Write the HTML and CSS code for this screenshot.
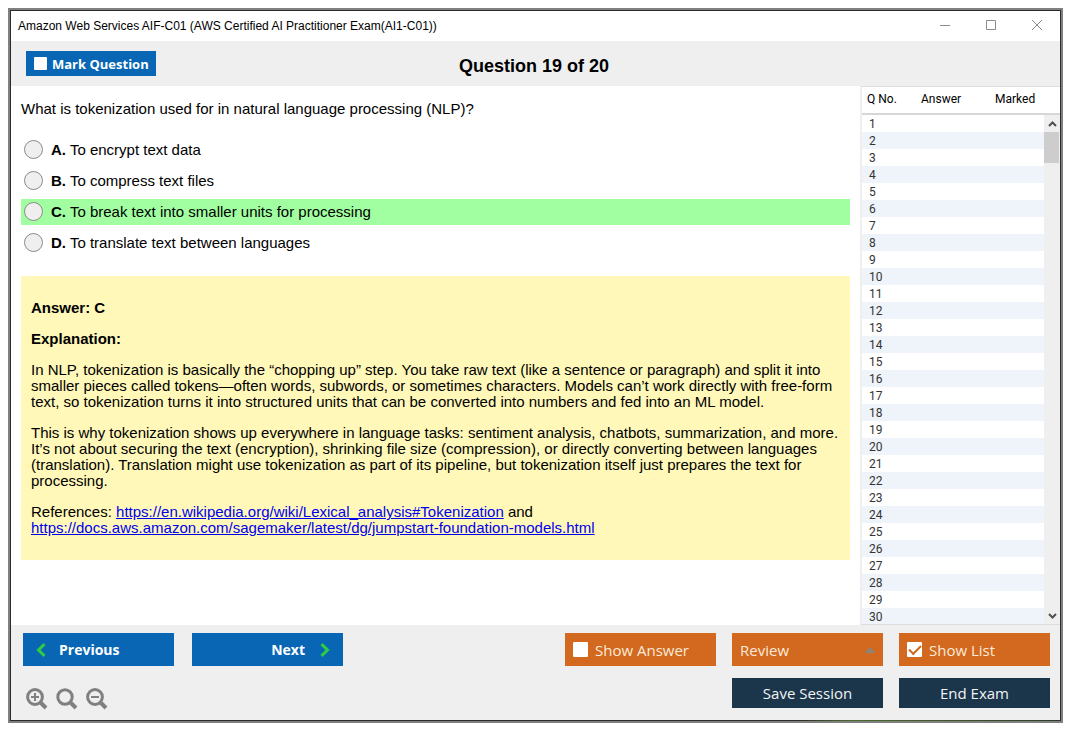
FILE: index.html
```html
<!DOCTYPE html>
<html lang="en">
<head>
<meta charset="utf-8">
<title>Amazon Web Services AIF-C01</title>
<link rel="stylesheet" href="styles.css">
</head>
<body>
<div class="window">
  <div class="window-inner">
    <header class="titlebar">
      <span class="titlebar-text">Amazon Web Services AIF-C01 (AWS Certified AI Practitioner Exam(AI1-C01))</span>
      <div class="window-controls">
        <button class="window-button" type="button" aria-label="Minimize"><svg width="12" height="12" viewBox="0 0 12 12"><path d="M1 5.500h10"/></svg></button>
        <button class="window-button" type="button" aria-label="Maximize"><svg width="12" height="12" viewBox="0 0 12 12"><path d="M1.500 .500h9v9h-9z"/></svg></button>
        <button class="window-button" type="button" aria-label="Close"><svg width="12" height="12" viewBox="0 0 12 12"><path d="M1 0l10 10M11 0L1 10"/></svg></button>
      </div>
    </header>

    <div class="question-bar">
      <label class="mark"><input class="check check-small" type="checkbox"><span>Mark Question</span></label>
      <h1 class="question-count">Question 19 of 20</h1>
    </div>

    <div class="workspace">
      <main class="question">
        <p class="prompt">What is tokenization used for in natural language processing (NLP)?</p>
        <div class="options" role="radiogroup" aria-label="Options">
          <label class="option"><input class="radio" type="radio" name="answer"><span><b>A.</b> To encrypt text data</span></label>
          <label class="option"><input class="radio" type="radio" name="answer"><span><b>B.</b> To compress text files</span></label>
          <label class="option option-correct"><input class="radio" type="radio" name="answer"><span><b>C.</b> To break text into smaller units for processing</span></label>
          <label class="option"><input class="radio" type="radio" name="answer"><span><b>D.</b> To translate text between languages</span></label>
        </div>
        <section class="explanation">
          <p><b>Answer: C</b></p>
          <p><b>Explanation:</b></p>
          <p>In NLP, tokenization is basically the “chopping up” step. You take raw text (like a sentence or paragraph) and split it into smaller pieces called tokens—often words, subwords, or sometimes characters. Models can’t work directly with free-form text, so tokenization turns it into structured units that can be converted into numbers and fed into an ML model.</p>
          <p>This is why tokenization shows up everywhere in language tasks: sentiment analysis, chatbots, summarization, and more. It’s not about securing the text (encryption), shrinking file size (compression), or directly converting between languages (translation). Translation might use tokenization as part of its pipeline, but tokenization itself just prepares the text for processing.</p>
          <p>References: <a href="https://en.wikipedia.org/wiki/Lexical_analysis#Tokenization">https://en.wikipedia.org/wiki/Lexical_analysis#Tokenization</a> and <a href="https://docs.aws.amazon.com/sagemaker/latest/dg/jumpstart-foundation-models.html">https://docs.aws.amazon.com/sagemaker/latest/dg/jumpstart-foundation-models.html</a></p>
        </section>
      </main>

      <aside class="list">
        <div class="list-view">
          <table class="list-table">
            <thead><tr><th class="col-number">Q No.</th><th class="col-answer">Answer</th><th>Marked</th></tr></thead>
            <tbody>
              <tr><td>1</td><td></td><td></td></tr>
              <tr><td>2</td><td></td><td></td></tr>
              <tr><td>3</td><td></td><td></td></tr>
              <tr><td>4</td><td></td><td></td></tr>
              <tr><td>5</td><td></td><td></td></tr>
              <tr><td>6</td><td></td><td></td></tr>
              <tr><td>7</td><td></td><td></td></tr>
              <tr><td>8</td><td></td><td></td></tr>
              <tr><td>9</td><td></td><td></td></tr>
              <tr><td>10</td><td></td><td></td></tr>
              <tr><td>11</td><td></td><td></td></tr>
              <tr><td>12</td><td></td><td></td></tr>
              <tr><td>13</td><td></td><td></td></tr>
              <tr><td>14</td><td></td><td></td></tr>
              <tr><td>15</td><td></td><td></td></tr>
              <tr><td>16</td><td></td><td></td></tr>
              <tr><td>17</td><td></td><td></td></tr>
              <tr><td>18</td><td></td><td></td></tr>
              <tr><td>19</td><td></td><td></td></tr>
              <tr><td>20</td><td></td><td></td></tr>
              <tr><td>21</td><td></td><td></td></tr>
              <tr><td>22</td><td></td><td></td></tr>
              <tr><td>23</td><td></td><td></td></tr>
              <tr><td>24</td><td></td><td></td></tr>
              <tr><td>25</td><td></td><td></td></tr>
              <tr><td>26</td><td></td><td></td></tr>
              <tr><td>27</td><td></td><td></td></tr>
              <tr><td>28</td><td></td><td></td></tr>
              <tr><td>29</td><td></td><td></td></tr>
              <tr><td>30</td><td></td><td></td></tr>
            </tbody>
          </table>
        </div>
        <div class="scroll">
          <div class="scroll-head"></div>
          <button class="scroll-arrow" type="button" aria-label="Scroll up"><svg width="9" height="6" viewBox="0 0 9 6"><path d="M1 5l3.500-3.500L8 5"/></svg></button>
          <div class="scroll-thumb"></div>
          <div class="scroll-space"></div>
          <button class="scroll-arrow" type="button" aria-label="Scroll down"><svg width="9" height="6" viewBox="0 0 9 6"><path d="M1 1l3.500 3.500L8 1"/></svg></button>
        </div>
      </aside>
    </div>

    <footer class="footer">
      <div class="footer-left">
        <div class="nav">
          <button class="button nav-button" type="button"><svg class="chevron" width="10" height="14" viewBox="0 0 10 14"><path d="M8.500 1.200L2.500 7l6 5.800"/></svg><span>Previous</span></button>
          <button class="button nav-button nav-next" type="button"><span>Next</span><svg class="chevron" width="10" height="14" viewBox="0 0 10 14"><path d="M1.500 1.200L7.500 7l-6 5.800"/></svg></button>
        </div>
        <div class="zoom">
          <button class="zoom-button" type="button" aria-label="Zoom in"><svg width="22" height="22" viewBox="0 0 22 22"><circle cx="9" cy="9" r="7.400"/><path class="handle" d="M14 14l6 6"/><path class="sign" d="M5 9h8M9 5v8"/></svg></button>
          <button class="zoom-button" type="button" aria-label="Reset zoom"><svg width="22" height="22" viewBox="0 0 22 22"><circle class="bold" cx="9" cy="9" r="7.200"/><path class="handle" d="M14 14l6 6"/></svg></button>
          <button class="zoom-button" type="button" aria-label="Zoom out"><svg width="22" height="22" viewBox="0 0 22 22"><circle cx="9" cy="9" r="7.400"/><path class="handle" d="M14 14l6 6"/><path class="sign" d="M5 9h8"/></svg></button>
        </div>
      </div>
      <div class="actions">
        <label class="button orange"><input class="check" type="checkbox"><span>Show Answer</span></label>
        <button class="button orange review" type="button" aria-haspopup="menu"><span>Review</span><svg width="10" height="6" viewBox="0 0 10 6"><path d="M0 6l5-6 5 6z" fill="#8a8580"/></svg></button>
        <label class="button orange"><input class="check" type="checkbox" checked><span>Show List</span></label>
        <button class="button navy save" type="button">Save Session</button>
        <button class="button navy" type="button">End Exam</button>
      </div>
    </footer>
  </div>
</div>
</body>
</html>
```
FILE: styles.css
```css
* { box-sizing: border-box; }

body {
  margin: 0;
  padding: 8px 12px 12px 8px;
  height: 100vh;
  display: flex;
  background: #fff;
  color: #000;
  font-family: "Liberation Sans", Arial, sans-serif;
  font-size: 15px;
}

button { font: inherit; margin: 0; padding: 0; border: 0; background: none; }
svg { display: block; fill: none; flex: none; }

.window {
  flex: 1;
  display: flex;
  padding: 1px;
  border: 2px solid #808080;
  background: linear-gradient(to right, #2b2b2b 75%, #4a6a2a 80%, #2e3a26 100%) bottom / 100% 1px no-repeat #2b2b2b;
}
.window-inner {
  flex: 1;
  min-width: 0;
  display: flex;
  flex-direction: column;
  background: #fff;
}

.titlebar {
  display: flex;
  justify-content: space-between;
  align-items: center;
  height: 30px;
  padding-left: 7px;
  font-size: 12px;
}
.window-controls { display: flex; }
.window-button { width: 46px; height: 28px; display: grid; place-items: center; }
.window-button svg { stroke: #8c8c8c; }

.question-bar {
  display: grid;
  grid-template-columns: 1fr auto 1fr;
  align-items: center;
  height: 45px;
  padding: 0 18px 0 15px;
  background: #efefef;
}
.mark {
  justify-self: start;
  display: flex;
  align-items: center;
  gap: 5px;
  width: 130px;
  height: 25px;
  padding-left: 8px;
  background: #0866b5;
  color: #fff;
  font: bold 13px "Open Sans", sans-serif;
}
.question-count { margin: 0; padding-top: 4px; font-size: 18px; line-height: 20px; }

.check {
  appearance: none;
  flex: none;
  width: 15px;
  height: 15px;
  margin: 0;
  border-radius: 1px;
  background: #fff;
}
.check-small { width: 13px; height: 13px; }
.check:checked { display: grid; place-items: center; }
.check:checked::before {
  content: "";
  width: 10px;
  height: 5px;
  border: solid #d2691e;
  border-width: 0 0 2px 2px;
  transform: translateY(-1px) rotate(-45deg);
}

.workspace { flex: 1; min-height: 0; display: flex; }
.question { flex: 1; min-width: 0; padding: 14px 10px; overflow: hidden; }
.prompt { margin: 0 0 19px; line-height: 18px; }
.options { display: flex; flex-direction: column; gap: 5px; }
.option { display: flex; align-items: center; gap: 8px; height: 26px; padding: 0 3px 2px; }
.option-correct { background: #a1ffa1; }
.radio {
  appearance: none;
  flex: none;
  width: 19px;
  height: 19px;
  margin: 0;
  border: 1px solid #8a8a8a;
  border-radius: 50%;
  background: #efefef;
}
.explanation {
  margin-top: 20px;
  padding: 24px 10px;
  background: #fff8b9;
  line-height: 16px;
}
.explanation p { margin: 0 0 15px; }
.explanation p:last-child { margin-bottom: 0; }
.explanation a { color: #0000ee; }

.list {
  width: 200px;
  display: flex;
  border: solid #dcdcdc;
  border-width: 1px 0 1px 2px;
  border-left-color: #efefef;
  font: 12px Roboto, sans-serif;
}
.list-view { flex: 1; overflow: hidden; }
.list-table { width: 100%; border-collapse: separate; border-spacing: 0; table-layout: fixed; }
.list-table th {
  height: 28px;
  padding: 0 0 2px;
  border-bottom: 2px solid #d6d6d6;
  text-align: left;
  font-weight: normal;
  white-space: nowrap;
}
.list-table th:first-child { padding-left: 5px; }
.col-number { width: 59px; }
.col-answer { width: 74px; }
.list-table td { height: 17px; padding: 1px 0 0 7px; line-height: 16px; color: #333; }
.list-table tbody tr:nth-child(even) { background: #eef4f9; }

.scroll { width: 16px; display: flex; flex-direction: column; background: #efefef; }
.scroll-head { height: 28px; border-bottom: 2px solid #d6d6d6; background: #fff; }
.scroll-arrow { height: 17px; display: grid; place-items: center; }
.scroll-arrow svg { stroke: #505050; stroke-width: 2; }
.scroll-thumb { height: 31px; margin-right: 1px; background: #cdcdcd; }
.scroll-space { flex: 1; }

.footer {
  display: flex;
  justify-content: space-between;
  padding: 8px 10px 12px 12px;
  background: #efefef;
}
.footer-left { display: flex; flex-direction: column; gap: 22px; }
.nav { display: flex; gap: 18px; }
.button {
  display: flex;
  align-items: center;
  font: 15px "Open Sans", sans-serif;
  color: #fff;
}
.nav-button {
  width: 151px;
  height: 33px;
  gap: 13px;
  padding: 0 13px;
  background: #0866b5;
  font-size: 14px;
  font-weight: bold;
}
.nav-next { justify-content: flex-end; gap: 15px; }
.chevron { stroke: #2ecc40; stroke-width: 3; }
.zoom { display: flex; gap: 8px; height: 20px; padding-left: 3px; }
.zoom-button { height: 22px; }
.zoom-button svg { stroke: #808080; stroke-width: 3; }
.zoom-button .sign { stroke-width: 2; }
.zoom-button .handle { stroke-width: 4; }

.actions {
  display: grid;
  grid-template-columns: repeat(3, 151px);
  grid-template-rows: 33px 30px;
  gap: 12px 16px;
}
.orange { gap: 7px; padding: 0 8px; background: #d2691e; color: #fbe9dc; }
.review { justify-content: space-between; }
.navy { justify-content: center; padding: 0 8px; background: #1b354b; color: #f2f4f6; }
.save { grid-column: 2; }
```
